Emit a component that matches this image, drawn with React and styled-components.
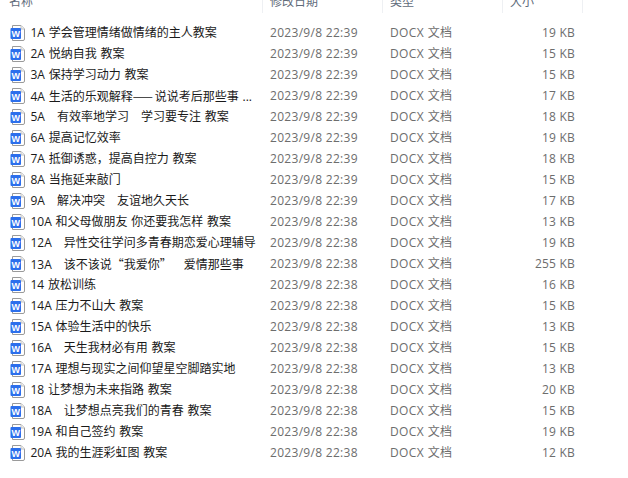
import styled, { createGlobalStyle } from "styled-components";

const GlobalStyle = createGlobalStyle`
    html, body {
        margin: 0;
        padding: 0;
        background: #fff;
    }
`;

const files = [
    ["1A 学会管理情绪做情绪的主人教案", "2023/9/8 22:39", "19 KB"],
    ["2A 悦纳自我 教案", "2023/9/8 22:39", "15 KB"],
    ["3A 保持学习动力 教案", "2023/9/8 22:39", "15 KB"],
    ["4A 生活的乐观解释——说说考后那些事 ...", "2023/9/8 22:39", "17 KB"],
    ["5A　有效率地学习　学习要专注 教案", "2023/9/8 22:39", "18 KB"],
    ["6A 提高记忆效率", "2023/9/8 22:39", "19 KB"],
    ["7A 抵御诱惑，提高自控力 教案", "2023/9/8 22:39", "18 KB"],
    ["8A 当拖延来敲门", "2023/9/8 22:39", "15 KB"],
    ["9A　解决冲突　友谊地久天长", "2023/9/8 22:39", "17 KB"],
    ["10A 和父母做朋友 你还要我怎样 教案", "2023/9/8 22:38", "13 KB"],
    ["12A　异性交往学问多青春期恋爱心理辅导", "2023/9/8 22:38", "19 KB"],
    ["13A　该不该说“我爱你”　爱情那些事", "2023/9/8 22:38", "255 KB"],
    ["14 放松训练", "2023/9/8 22:38", "16 KB"],
    ["14A 压力不山大 教案", "2023/9/8 22:38", "15 KB"],
    ["15A 体验生活中的快乐", "2023/9/8 22:38", "13 KB"],
    ["16A　天生我材必有用 教案", "2023/9/8 22:38", "15 KB"],
    ["17A 理想与现实之间仰望星空脚踏实地", "2023/9/8 22:38", "13 KB"],
    ["18 让梦想为未来指路 教案", "2023/9/8 22:38", "20 KB"],
    ["18A　让梦想点亮我们的青春 教案", "2023/9/8 22:38", "15 KB"],
    ["19A 和自己签约 教案", "2023/9/8 22:38", "19 KB"],
    ["20A 我的生涯彩虹图 教案", "2023/9/8 22:38", "12 KB"],
];

function WordIcon() {
    return (
        <IconBox width="16" height="16" viewBox="0 0 16 16">
            <path d="M2.5 0.5H11L14.5 4V14Q14.5 15.5 13 15.5H2.5Z" fill="#fff" stroke="#9a9a9a" />
            <path d="M11 0.5V4H14.5" fill="#f0f0f0" stroke="#c2c2c2" />
            <rect x="0.5" y="3" width="10.5" height="11" rx="1" fill="#2c6fec" />
            <text x="5.7" y="12" fontSize="9" fontWeight="700" fill="#fff" textAnchor="middle" fontFamily="'Liberation Sans', sans-serif">W</text>
        </IconBox>
    );
}

// the quotes and dashes come from the CJK font, they are full width there
function FileName({ text }) {
    const parts = text.split(/([“”]|—+)/);
    return (
        <Name>
            {parts.map((part, i) =>
                i % 2 === 1 ? (
                    <Wide key={i} $dash={part.startsWith("—")}>{part}</Wide>
                ) : (
                    part
                )
            )}
        </Name>
    );
}

function App() {
    return (
        <>
            <GlobalStyle />
            <Page>
                <Header>
                    <HeaderCell $width={263} $padding={9}>名称</HeaderCell>
                    <HeaderCell $width={120} $padding={7}>修改日期</HeaderCell>
                    <HeaderCell $width={120} $padding={7}>类型</HeaderCell>
                    <HeaderCell $width={80} $padding={7}>大小</HeaderCell>
                </Header>
                <List>
                    {files.map(([name, date, size]) => (
                        <Row key={name}>
                            <NameCell>
                                <WordIcon />
                                <FileName text={name} />
                            </NameCell>
                            <DateCell>{date}</DateCell>
                            <TypeCell>DOCX 文档</TypeCell>
                            <SizeCell>{size}</SizeCell>
                        </Row>
                    ))}
                </List>
            </Page>
        </>
    );
}

export default App;

const Page = styled.div`
    width: 628px;
    height: 478px;
    overflow: hidden;
    background: #fff;
    font-family: "Open Sans", "Noto Sans CJK SC", sans-serif;
    font-size: 12px;
    text-spacing-trim: space-all;
`;

const Header = styled.div`
    display: flex;
    height: 13px;
    overflow: hidden;
`;

const HeaderCell = styled.div`
    width: ${(props) => props.$width}px;
    padding-left: ${(props) => props.$padding}px;
    box-sizing: border-box;
    border-right: 1px solid #eef0f3;
    color: #5f6b7a;
    line-height: 16px;
    margin-top: -6px;
    height: 19px;
`;

const List = styled.div`
    display: flex;
    flex-direction: column;
    padding-top: 9px;
`;

const Row = styled.div`
    display: flex;
    align-items: center;
    height: 21px;
    line-height: 21px;
`;

const NameCell = styled.div`
    display: flex;
    align-items: center;
    gap: 4.5px;
    width: 270px;
    padding-left: 10px;
    box-sizing: border-box;
    color: #1a1a1a;
`;

const IconBox = styled.svg`
    flex: none;
`;

const Name = styled.span`
    white-space: pre;
    word-spacing: 0.6px;
`;

const Wide = styled.span`
    font-family: "Noto Sans CJK SC", sans-serif;
    letter-spacing: ${(props) => (props.$dash ? "2px" : "0")};
`;

const DateCell = styled.div`
    width: 120px;
    color: #6d6d6d;
    letter-spacing: 0.3px;
`;

const TypeCell = styled.div`
    width: 120px;
    color: #6d6d6d;
    letter-spacing: 0.4px;
`;

const SizeCell = styled.div`
    width: 65px;
    text-align: right;
    color: #6d6d6d;
    letter-spacing: 0.2px;
`;
